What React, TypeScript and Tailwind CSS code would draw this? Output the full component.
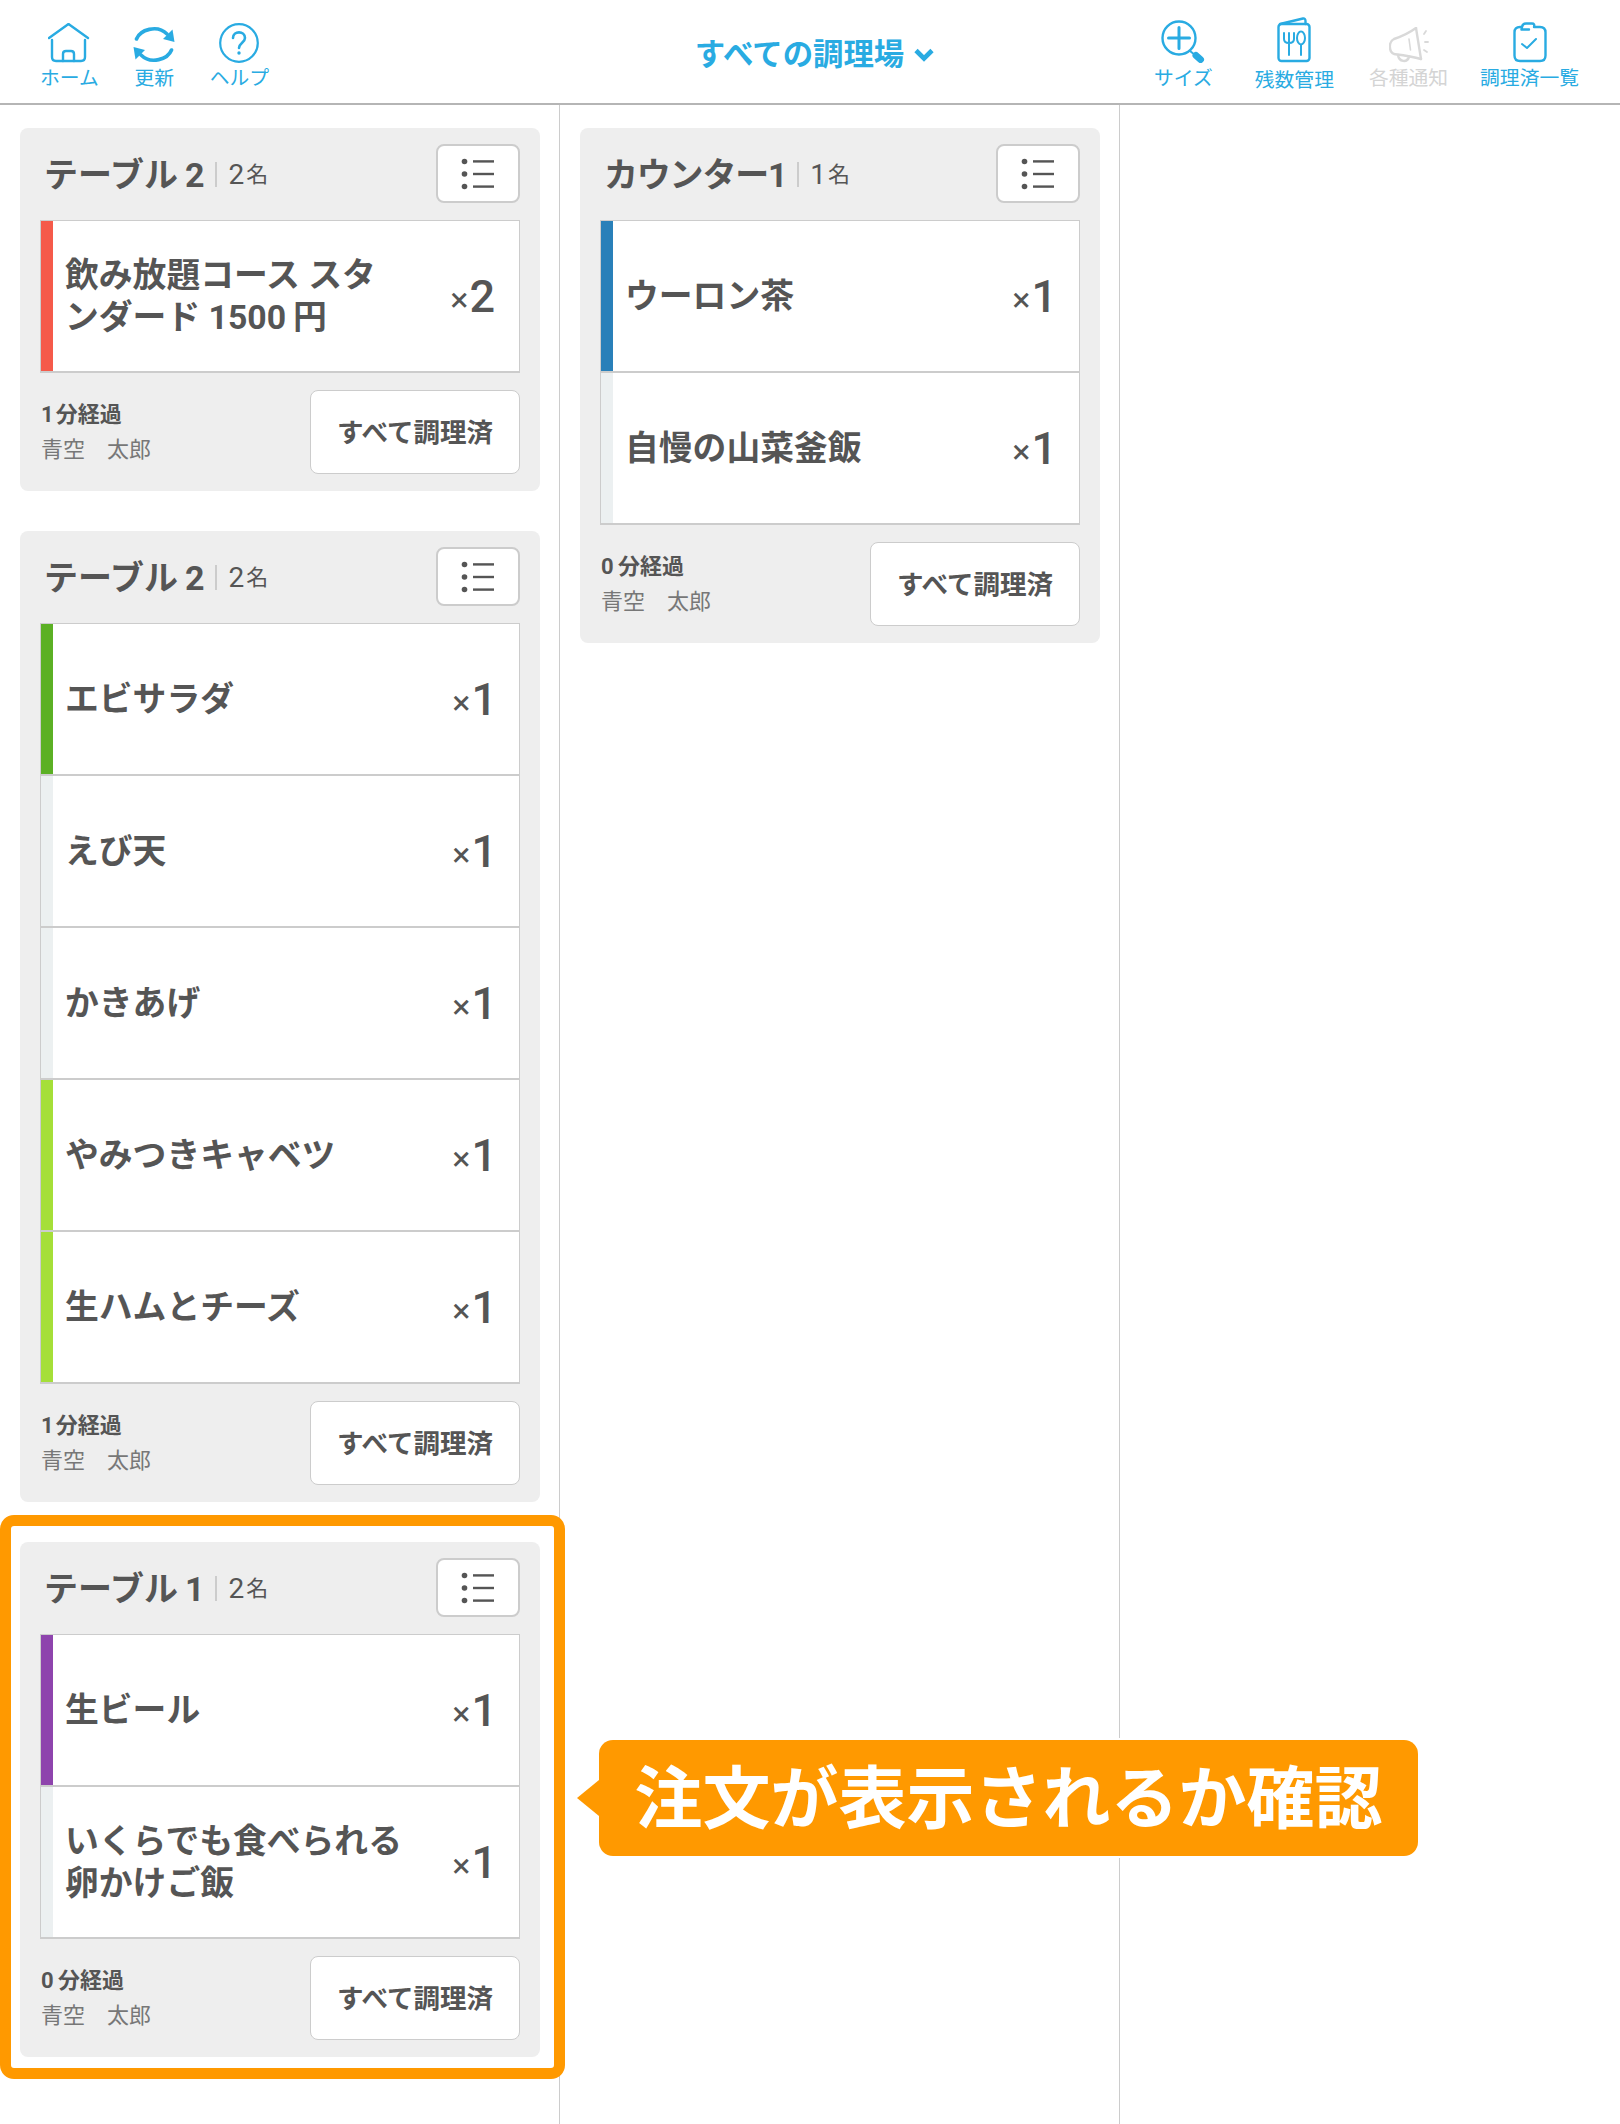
import type { ReactNode } from 'react';

const FONT = 'font-["Roboto","Noto_Sans_CJK_JP",sans-serif]';

function HomeIcon() {
  return (
    <svg width="42" height="40" viewBox="0 0 42 40" fill="none" stroke="#29abe2" strokeWidth="2.4" strokeLinecap="round" strokeLinejoin="round">
      <path d="M1 15 L20.5 1 L40 15" />
      <path d="M4 17 V34 Q4 38 8 38 H33 Q37 38 37 34 V17" />
      <path d="M15 38 V31 Q15 28 18 28 H23 Q26 28 26 31 V38" />
    </svg>
  );
}

function RefreshIcon() {
  return (
    <svg width="42" height="37" viewBox="0 0 42 37">
      <g fill="none" stroke="#29abe2" strokeWidth="3.6" strokeLinecap="round">
        <path d="M3.5 13 C7 4 24 -2 34 8" />
        <path d="M38.5 24 C35 33 18 39 8 29" />
      </g>
      <path d="M39.5 3.5 L41.5 16 L30 13 Z" fill="#29abe2" />
      <path d="M2.5 33.5 L0.5 21 L12 24 Z" fill="#29abe2" />
    </svg>
  );
}

function HelpIcon() {
  return (
    <svg width="40" height="40" viewBox="0 0 40 40" fill="none" stroke="#29abe2" strokeWidth="2.2" strokeLinecap="round">
      <circle cx="20" cy="20" r="18.8" />
      <path d="M14 15 C14 7.5 26 7.5 26 15 C26 19.5 20 20 20 25" strokeWidth="2.6" />
      <circle cx="20" cy="30" r="1.7" fill="#29abe2" stroke="none" />
    </svg>
  );
}

function SizeIcon() {
  return (
    <svg width="44" height="43" viewBox="0 0 44 43" fill="none" stroke="#29abe2" strokeLinecap="round">
      <circle cx="18" cy="18" r="16.5" strokeWidth="2.4" />
      <path d="M7.5 18 H28.5 M18 7.5 V28.5" strokeWidth="3" />
      <path d="M29 31 L34 35" strokeWidth="2" />
      <path d="M35 35.5 L39.5 39.5" strokeWidth="7" />
    </svg>
  );
}

function MenuIcon() {
  return (
    <svg width="34" height="46" viewBox="0 0 34 46" fill="none" stroke="#29abe2" strokeWidth="2.4" strokeLinecap="round" strokeLinejoin="round">
      <rect x="1.5" y="7" width="31" height="37" rx="3" />
      <path d="M3 7 L26 1.5 Q28.5 1.2 28.5 4 V7" />
      <path d="M7 16 V22 Q7 26 12 26 Q17 26 17 22 V16 M12 16 V38" strokeWidth="2" />
      <ellipse cx="24" cy="21" rx="4" ry="6.5" strokeWidth="2" />
      <path d="M24 28 V38" strokeWidth="2" />
    </svg>
  );
}

function NoticeIcon() {
  return (
    <svg width="40" height="36" viewBox="0 0 40 36" fill="none" stroke="#d9d9d9" strokeWidth="2.4" strokeLinecap="round" strokeLinejoin="round">
      <path d="M27 1 L32 32" />
      <path d="M27 1 C20 6 11 10 5 12 C-1 15 0 25 5 27 C13 28 22 29 32 32" />
      <path d="M9 28 C10 35 18 36 20 30" />
      <path d="M20 12 L21.5 23" strokeWidth="1.6" />
      <path d="M35 7 L37 4 M36 15 H39 M35 23 L38 25" strokeWidth="1.8" />
    </svg>
  );
}

function CheckedIcon() {
  return (
    <svg width="34" height="41" viewBox="0 0 34 41" fill="none" stroke="#29abe2" strokeWidth="2.4" strokeLinecap="round" strokeLinejoin="round">
      <path d="M9 5 H7 Q1.5 5 1.5 10.5 V33.5 Q1.5 39 7 39 H27 Q32.5 39 32.5 33.5 V10.5 Q32.5 5 27 5 H21 Q22 1.5 19 1.5 H13 Q9.5 1.5 9 5 L8.5 7.5 H16" />
      <path d="M9 22 L14 26 L23 17" strokeWidth="2" />
    </svg>
  );
}

function ListIcon() {
  return (
    <svg width="34" height="32" viewBox="0 0 34 32" fill="#555555">
      <circle cx="3.5" cy="3.5" r="2.8" />
      <circle cx="3.5" cy="16" r="2.8" />
      <circle cx="3.5" cy="28.5" r="2.8" />
      <rect x="12" y="2.2" width="21" height="2.4" />
      <rect x="12" y="14.8" width="21" height="2.4" />
      <rect x="12" y="27.4" width="21" height="2.4" />
    </svg>
  );
}

function NavItem({ icon, label, disabled, tall, className }: { icon: ReactNode; label: string; disabled?: boolean; tall?: boolean; className?: string }) {
  return (
    <div className={`flex flex-col items-center ${disabled ? 'text-[#d4d4d4]' : 'text-[#29abe2]'} ${className ?? ''}`}>
      <div className="flex h-[46px] items-end justify-center">{icon}</div>
      <span className={`whitespace-nowrap text-[19.8px] leading-[22px] font-normal ${tall ? 'mt-[7px]' : 'mt-[5px]'}`}>{label}</span>
    </div>
  );
}

type Item = { name: string; qty: number; color: string };

function OrderItem({ item }: { item: Item }) {
  return (
    <div className="flex h-[152px] border-b-2 border-[#cccccc] bg-white">
      <div className="w-[12px] shrink-0" style={{ backgroundColor: item.color }} />
      <div className="flex min-w-0 flex-1 items-center justify-between pr-[22px] pl-[12px]">
        <p className="w-[340px] pt-[2px] text-[33.8px] leading-[42px] font-bold text-[#555555]">{item.name}</p>
        <p className={`flex items-center text-[#555555] ${item.qty > 1 ? 'mr-[2px]' : ''}`}>
          <span className="mt-[6px] text-[34px] leading-none font-normal">×</span>
          <span className="ml-px text-[45px] leading-none font-medium">{item.qty}</span>
        </p>
      </div>
    </div>
  );
}

function OrderCard({ table, guests, elapsed, items, tight }: { table: string; guests: number; elapsed: string; items: Item[]; tight?: boolean }) {
  return (
    <div className="rounded-[8px] bg-[#eeeeee] pt-[16px] pr-[20px] pb-[17px] pl-[20px]">
      <div className="flex h-[59px] items-center justify-between pl-[4px]">
        <div className="flex items-center pt-[2px] text-[#555555]">
          <span className={`text-[34px] leading-none font-bold ${tight ? 'tracking-[-1.2px]' : ''}`}>{table}</span>
          <span className="mx-[11px] h-[25px] w-[2px] bg-[#cccccc]" />
          <span className="text-[28px] leading-none">{guests}</span>
          <span className="ml-[2px] text-[22px] leading-none">名</span>
        </div>
        <button className="flex h-[59px] w-[84px] items-center justify-center rounded-[8px] border-2 border-[#cccccc] bg-white">
          <ListIcon />
        </button>
      </div>
      <div className="mt-[17px] border-x border-t border-[#cccccc]">
        {items.map((item) => (
          <OrderItem key={item.name} item={item} />
        ))}
      </div>
      <div className="mt-[17px] flex items-center justify-between">
        <div className="pl-px">
          <p className="text-[22px] leading-[28px] font-bold text-[#555555]">{elapsed}</p>
          <p className="mt-[7px] text-[22px] leading-[28px] text-[#777777]">青空　太郎</p>
        </div>
        <button className="h-[84px] w-[210px] rounded-[8px] border border-[#cccccc] bg-white pt-[2px] text-[26.5px] font-bold text-[#555555]">
          すべて調理済
        </button>
      </div>
    </div>
  );
}

const RED = '#f55a4a';
const BLUE = '#2980b9';
const GREEN = '#5bb024';
const LIME = '#a5df38';
const PURPLE = '#8e44ad';
const NONE = '#ecf0f1';

export default function App() {
  return (
    <div className={`${FONT} h-[2124px] w-[1620px] overflow-hidden bg-white`}>
      <header className="flex h-[105px] items-start justify-between border-b-2 border-[#b5b5b5] pt-[17px] pr-[41px] pl-[40px]">
        <div className="flex w-[435px] gap-[34.5px]">
          <NavItem icon={<HomeIcon />} label="ホーム" />
          <NavItem icon={<RefreshIcon />} label="更新" />
          <NavItem icon={<HelpIcon />} label="ヘルプ" />
        </div>
        <div className="mt-[18px] flex items-center gap-[10px] text-[30.4px] leading-[40px] font-bold text-[#29abe2]">
          すべての調理場
          <svg width="20" height="14" viewBox="0 0 20 14" fill="none" stroke="#29abe2" strokeWidth="4.6">
            <path d="M2 2.5 L10 10.5 L18 2.5" />
          </svg>
        </div>
        <div className="flex gap-[32px]">
          <NavItem icon={<SizeIcon />} label="サイズ" className="mr-[10px]" />
          <NavItem icon={<MenuIcon />} label="残数管理" tall className="mr-[3px]" />
          <NavItem icon={<NoticeIcon />} label="各種通知" disabled />
          <NavItem icon={<CheckedIcon />} label="調理済一覧" />
        </div>
      </header>

      <main className="flex h-[2019px]">
        <div className="flex w-[560px] flex-col gap-[40px] border-r border-[#cccccc] pt-[23px] pr-[19px] pl-[20px]">
          <OrderCard table={'テーブル\u20092'} guests={2} elapsed={'1\u200A分経過'} items={[{ name: '飲み放題コース スタンダード 1500\u2009円', qty: 2, color: RED }]} />
          <OrderCard
            table={'テーブル\u20092'}
            guests={2}
            elapsed={'1\u200A分経過'}
            items={[
              { name: 'エビサラダ', qty: 1, color: GREEN },
              { name: 'えび天', qty: 1, color: NONE },
              { name: 'かきあげ', qty: 1, color: NONE },
              { name: 'やみつきキャベツ', qty: 1, color: LIME },
              { name: '生ハムとチーズ', qty: 1, color: LIME },
            ]}
          />
          <div className="relative">
            <OrderCard
              table={'テーブル\u20091'}
              guests={2}
              elapsed={'0\u2009分経過'}
              items={[
                { name: '生ビール', qty: 1, color: PURPLE },
                { name: 'いくらでも食べられる卵かけご飯', qty: 1, color: NONE },
              ]}
            />
            {/* highlight around the third card */}
            <div className="pointer-events-none absolute -top-[27px] -right-[25px] -bottom-[22px] -left-[20px] rounded-[14px] border-[11px] border-[#ff9900]" />
            {/* callout */}
            <div className="absolute top-[198px] left-[579px] z-10 flex h-[116px] w-[819px] items-center justify-center rounded-[14px] bg-[#ff9900] pt-[3px] text-[68px] font-bold whitespace-nowrap text-white ring-2 ring-white">
              <div className="absolute top-[40px] -left-[22px] h-0 w-0 border-y-[18px] border-r-[22px] border-y-transparent border-r-[#ff9900]" />
              注文が表示されるか確認
            </div>
          </div>
        </div>
        <div className="flex w-[560px] flex-col border-r border-[#cccccc] pt-[23px] pr-[19px] pl-[20px]">
          <OrderCard
            table="カウンター1"
            tight
            guests={1}
            elapsed={'0\u2009分経過'}
            items={[
              { name: 'ウーロン茶', qty: 1, color: BLUE },
              { name: '自慢の山菜釜飯', qty: 1, color: NONE },
            ]}
          />
        </div>
      </main>
    </div>
  );
}
